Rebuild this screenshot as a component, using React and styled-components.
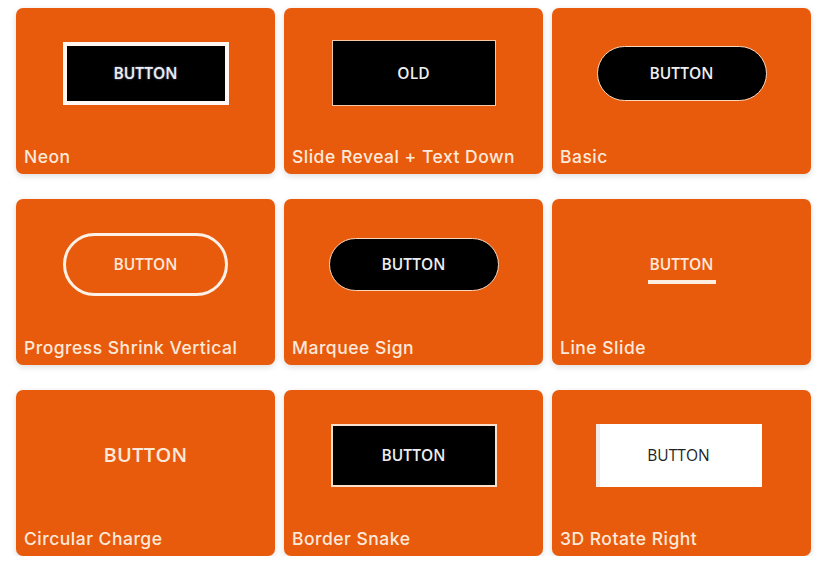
import React from 'react'
import styled, {createGlobalStyle, css} from 'styled-components'

const GlobalStyle = createGlobalStyle`
  html, body {
    margin: 0;
    padding: 0;
    background: #ffffff;
  }
  body {
    font-family: "Open Sans", "Noto Sans", sans-serif;
  }
`

const Gallery = styled.div`
  display: grid;
  grid-template-columns: repeat(3, 259px);
  grid-auto-rows: 166px;
  column-gap: 9px;
  row-gap: 25px;
  padding: 8px 0 0 16px;
`

const Card = styled.div`
  display: flex;
  flex-direction: column;
  background: #e85a0c;
  border-radius: 7px;
  box-shadow: 0 2px 6px rgba(0, 0, 0, 0.14);
  overflow: hidden;
`

const Stage = styled.div`
  height: 130px;
  display: flex;
  align-items: center;
  justify-content: center;
`

const Label = styled.div`
  padding: 0 0 0 8px;
  margin-top: auto;
  margin-bottom: 7px;
  font-family: Inter, "Open Sans", sans-serif;
  font-weight: 500;
  font-size: 17.5px;
  letter-spacing: 0.5px;
  color: #fde9da;
`

const buttonText = css`
  font-family: "Open Sans", "Noto Sans", sans-serif;
  font-weight: 600;
  font-size: 15.5px;
  letter-spacing: 0.1px;
  display: flex;
  align-items: center;
  justify-content: center;
  box-sizing: border-box;
`

const Box = styled.div`
  ${buttonText};
  width: ${p => p.$w}px;
  height: ${p => p.$h}px;
  background: ${p => p.$bg || '#000'};
  color: ${p => p.$fg || '#eeeeee'};
  border: ${p => p.$border || 'none'};
  border-radius: ${p => p.$radius || 0}px;
  text-shadow: ${p => p.$glow ? '0 0 2px rgba(170, 190, 255, 0.7)' : 'none'};
`

// white face turned a few degrees, showing its left side
const TiltBox = styled(Box)`
  margin-right: 6px;
  box-shadow: inset 4px 0 0 #f1ece9;
  color: #222;
  font-weight: 500;
`

const LineButton = styled.div`
  ${buttonText};
  flex-direction: column;
  gap: 5px;
  color: #fde9da;
  transform: translateY(4px);

  &::after {
    content: '';
    display: block;
    width: 68px;
    height: 4px;
    background: #fdeee2;
  }
`

const PlainButton = styled.div`
  ${buttonText};
  font-size: 20px;
  font-weight: 600;
  letter-spacing: 0.3px;
  color: #fde9da;
  transform: translateY(-1px);
`

const demos = [
  {name: 'Neon', el: <Box $w={166} $h={63} $border="4px solid #fff8f2" $glow>BUTTON</Box>},
  {name: 'Slide Reveal + Text Down', el: <Box $w={164} $h={66} $border="1px solid #f5c9a8">OLD</Box>},
  {name: 'Basic', el: <Box $w={170} $h={55} $radius={28} $border="1.5px solid #fbd8bd">BUTTON</Box>},
  {name: 'Progress Shrink Vertical', el: <Box $w={165} $h={63} $radius={32} $bg="transparent" $fg="#fde9da" $border="3px solid #fdf0e6">BUTTON</Box>},
  {name: 'Marquee Sign', el: <Box $w={170} $h={53} $radius={27} $border="1.5px solid #fbd8bd">BUTTON</Box>},
  {name: 'Line Slide', el: <LineButton>BUTTON</LineButton>},
  {name: 'Circular Charge', el: <PlainButton>BUTTON</PlainButton>},
  {name: 'Border Snake', el: <Box $w={166} $h={63} $border="2px solid #fbe0cc">BUTTON</Box>},
  {name: '3D Rotate Right', el: <TiltBox $w={166} $h={63} $bg="#ffffff">BUTTON</TiltBox>},
]

export default function App() {
  return (
    <>
      <GlobalStyle/>
      <Gallery>
        {demos.map(({name, el}) =>
          <Card key={name}>
            <Stage>{el}</Stage>
            <Label>{name}</Label>
          </Card>
        )}
      </Gallery>
    </>
  )
}
